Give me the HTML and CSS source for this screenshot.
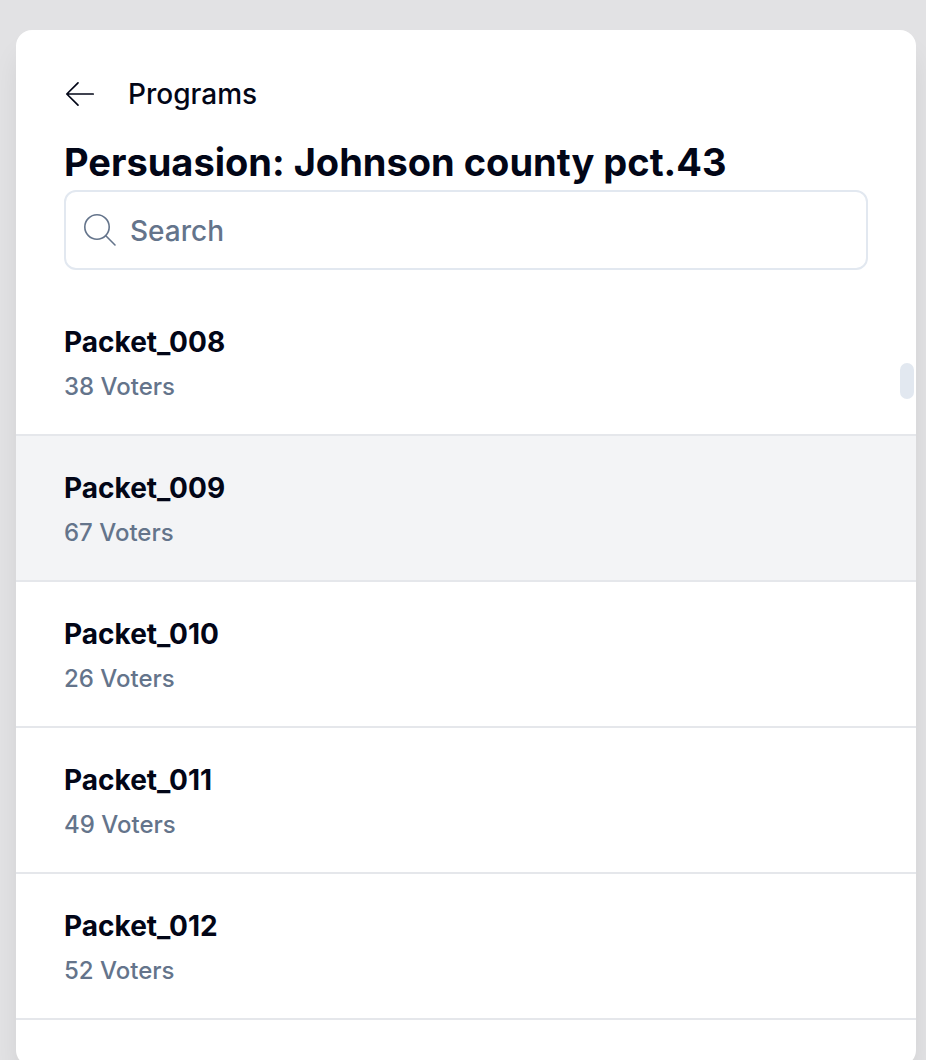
FILE: index.html
```html
<!DOCTYPE html>
<html lang="en">
<head>
<meta charset="utf-8">
<meta name="viewport" content="width=device-width, initial-scale=1">
<title>Programs</title>
<link rel="stylesheet" href="styles.css">
</head>
<body>
<main class="panel">
  <header class="header">
    <a class="back" href="#">
      <svg class="back-icon" viewBox="0 0 32 32" aria-hidden="true"><path d="M29.200 16H3M14 4.800L2.800 16L14 27.200"/></svg>
      <span>Programs</span>
    </a>
    <h1 class="title">Persuasion: Johnson county pct.43</h1>
    <label class="search">
      <svg class="search-icon" viewBox="0 0 36 36" aria-hidden="true"><circle cx="15" cy="15" r="12.200"/><path d="M23.800 23.800l9.200 9.200"/></svg>
      <input class="search-input" type="text" placeholder="Search" aria-label="Search">
    </label>
  </header>
  <ul class="packets">
    <li><button class="packet" type="button"><span class="name">Packet_008</span><span class="count">38 Voters</span></button></li>
    <li><button class="packet selected" type="button"><span class="name">Packet_009</span><span class="count">67 Voters</span></button></li>
    <li><button class="packet" type="button"><span class="name">Packet_010</span><span class="count">26 Voters</span></button></li>
    <li><button class="packet" type="button"><span class="name">Packet_011</span><span class="count">49 Voters</span></button></li>
    <li><button class="packet" type="button"><span class="name">Packet_012</span><span class="count">52 Voters</span></button></li>
  </ul>
  <div class="scroll-thumb"></div>
</main>
</body>
</html>
```
FILE: styles.css
```css
* { box-sizing: border-box; }

body {
  margin: 0;
  padding: 30px 10px 0 16px;
  height: 100vh;
  overflow: hidden;
  background: #e2e2e4;
  color: #020617;
  font-family: Inter, "Liberation Sans", sans-serif;
}

.panel {
  position: relative;
  padding-bottom: 46px;
  border-radius: 16px;
  background: #fff;
  box-shadow: 0 20px 30px -6px rgba(0, 0, 0, 0.1);
}

.header {
  display: flex;
  flex-direction: column;
  padding: 44px 48px 20px;
}

.back {
  display: flex;
  align-items: center;
  align-self: flex-start;
  gap: 32px;
  color: inherit;
  font-size: 28px;
  font-weight: 500;
  line-height: 40px;
  text-decoration: none;
}

.back-icon {
  width: 32px;
  height: 32px;
  fill: none;
  stroke: currentColor;
  stroke-width: 1.7;
  stroke-linecap: round;
  stroke-linejoin: round;
}

.title {
  margin: 20px 0 0;
  font-size: 38px;
  font-weight: 700;
  line-height: 56px;
}

.search {
  display: flex;
  align-items: center;
  gap: 12px;
  height: 80px;
  padding: 0 16px;
  border: 2px solid #e2e8f0;
  border-radius: 12px;
}

.search-icon {
  flex: none;
  width: 36px;
  height: 36px;
  fill: none;
  stroke: #64748b;
  stroke-width: 1.6;
  stroke-linecap: round;
}

.search-input {
  flex: 1;
  min-width: 0;
  padding: 2px 0 0;
  border: 0;
  outline: 0;
  background: none;
  color: inherit;
  font: 500 28px/40px Inter, "Liberation Sans", sans-serif;
}

.search-input::placeholder {
  color: #64748b;
  opacity: 1;
}

.packets {
  margin: 0;
  padding: 0;
  list-style: none;
}

.packet {
  display: flex;
  flex-direction: column;
  gap: 5px;
  width: 100%;
  padding: 32px 48px 27px;
  border: 0;
  border-bottom: 2px solid #e5e7eb;
  background: none;
  color: inherit;
  font-family: inherit;
  line-height: 40px;
  text-align: left;
}

.selected { background: #f3f4f6; }

.name {
  font-size: 28px;
  font-weight: 700;
}

.count {
  color: #64748b;
  font-size: 24px;
  font-weight: 500;
}

.scroll-thumb {
  position: absolute;
  top: 333px;
  right: 2px;
  width: 14px;
  height: 36px;
  border-radius: 7px;
  background: #e2e8f0;
}
```
